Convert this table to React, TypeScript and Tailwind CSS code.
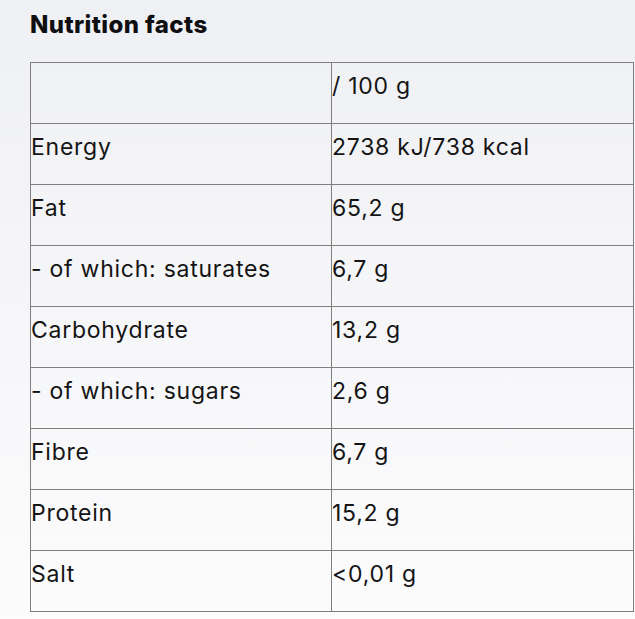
import React from "react";

const rows: [string, string][] = [
	["", "/ 100 g"],
	["Energy", "2738 kJ/738 kcal"],
	["Fat", "65,2 g"],
	["- of which: saturates", "6,7 g"],
	["Carbohydrate", "13,2 g"],
	["- of which: sugars", "2,6 g"],
	["Fibre", "6,7 g"],
	["Protein", "15,2 g"],
	["Salt", "<0,01 g"],
];

export default function App() {
	return (
		<div className="min-h-[619px] w-[635px] bg-gradient-to-b from-[#eff0f3] to-[#fcfcfd] pl-[30px] pt-[9px] font-['Inter',sans-serif] text-[#141414]">
			<h2 className="text-[24px] font-extrabold leading-[32px] tracking-[0.4px] text-[#0f0f12]">Nutrition facts</h2>
			<table className="mt-[21px] w-[604px] table-fixed border-collapse border border-[#7f7f7f]">
				<tbody>
					{rows.map(([label, value], i) => (
						<tr key={i} className="h-[61px]">
							<td className="w-[301px] border border-[#7f7f7f] pt-[8px] align-top text-[23px] leading-[30px] tracking-[0.75px]">{label}</td>
							<td className="border border-[#7f7f7f] pt-[8px] align-top text-[23px] leading-[30px] tracking-[0.75px]">{value}</td>
						</tr>
					))}
				</tbody>
			</table>
		</div>
	);
}
